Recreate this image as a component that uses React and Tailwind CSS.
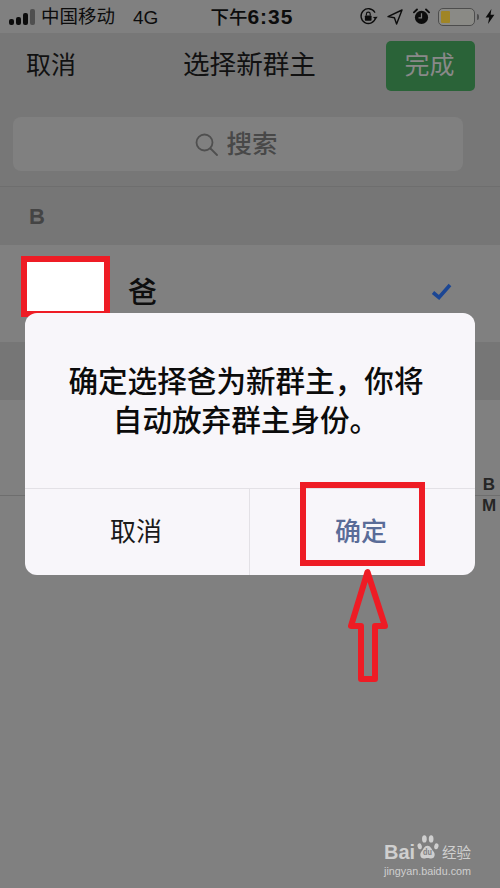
const cjk = "font-['Liberation_Sans','Noto_Sans_CJK_SC',sans-serif]";

function Signal() {
  return (
    <div className="flex items-end gap-[2px] h-[16px] w-[27px]">
      <span className="w-[5px] h-[6px] rounded-[2px] bg-[#0c0c0c]" />
      <span className="w-[5px] h-[8px] rounded-[2px] bg-[#0c0c0c]" />
      <span className="w-[5px] h-[12px] rounded-[2px] bg-[#0c0c0c]" />
      <span className="w-[5px] h-[16px] rounded-[2px] bg-[#4f4f4f]" />
    </div>
  );
}

function RotationLock() {
  return (
    <svg width="19" height="19" viewBox="0 0 20 20" fill="none" stroke="#0c0c0c" strokeWidth="1.4">
      <path d="M17.5 11.5A7.8 7.8 0 1 1 16.6 5.5" strokeLinecap="round" />
      <path d="M14.5 10.5l3 2.6 2.2-2.8" fill="#0c0c0c" stroke="none" />
      <rect x="6.2" y="9" width="7" height="5.5" rx="0.8" fill="#0c0c0c" stroke="none" />
      <path d="M7.8 9V7.4a2 2 0 0 1 4 0V9" strokeWidth="1.2" />
    </svg>
  );
}

function LocationArrow() {
  return (
    <svg width="16" height="16" viewBox="0 0 16 16" fill="none" stroke="#0c0c0c" strokeWidth="1.4" strokeLinejoin="round">
      <path d="M15 1L1 7.6l6.4 1.2L9.6 15z" />
    </svg>
  );
}

function Alarm() {
  return (
    <svg width="17" height="17" viewBox="0 0 18 18">
      <circle cx="9" cy="10" r="7" fill="#0c0c0c" />
      <path d="M1 4.6L4.2 1.6M17 4.6L13.8 1.6" stroke="#0c0c0c" strokeWidth="2" strokeLinecap="round" />
      <path d="M9 5.6V10.4H5.8" stroke="#7a7a7a" strokeWidth="1.3" fill="none" />
    </svg>
  );
}

function Battery() {
  return (
    <div className="flex items-center gap-[2px]">
      <div className="w-[37px] h-[18px] rounded-[5px] border-[1.5px] border-[#4d4d4d] p-[2px] bg-[#8a8a86]">
        <div className="w-[9px] h-full rounded-[1px] bg-[#a08526]" />
      </div>
      <span className="w-[2px] h-[6px] rounded-r-[2px] bg-[#4d4d4d]" />
      <svg width="10" height="15" viewBox="0 0 10 15" className="ml-[4px]">
        <path d="M6.4 0L0.6 8.4H4.2L3 15 9.4 5.8H5.6z" fill="#0c0c0c" />
      </svg>
    </div>
  );
}

function Watermark() {
  return (
    <div className="absolute left-[384px] top-[834px] w-[100px] text-[#cfcfcf]">
      <div className="flex items-end h-[29px]">
        <span className="text-[20px] leading-[22px] font-bold w-[31px]">Bai</span>
        <svg width="25" height="27" viewBox="0 0 48 44" preserveAspectRatio="none" fill="#cfcfcf" className="mb-[2px]">
          <ellipse cx="9" cy="20" rx="4" ry="5" transform="rotate(-20 9 20)" />
          <ellipse cx="18" cy="8" rx="4.5" ry="6" />
          <ellipse cx="31" cy="8" rx="4.5" ry="6" />
          <ellipse cx="41" cy="20" rx="4" ry="5" transform="rotate(20 41 20)" />
          <path d="M24 19c6 0 8 6 12 10 4 5 1 11-5 11-3 0-4-1-7-1s-4 1-7 1c-6 0-9-6-5-11 4-4 6-10 12-10z" />
          <text x="24" y="35" textAnchor="middle" fontSize="14" fontWeight="700" fill="#808080">du</text>
        </svg>
        <span className="text-[14.5px] leading-[20px] ml-[2px] whitespace-nowrap">经验</span>
      </div>
      <div className="text-[10.8px] leading-[14px] mt-[1px] whitespace-nowrap">jingyan.baidu.com</div>
    </div>
  );
}

function Overlays() {
  return (
    <>
      <div className="absolute left-[21px] top-[256px] w-[89px] h-[61px] bg-white border-[6px] border-[#ee1c25]" />

      <div className="absolute left-[25px] top-[313px] w-[450px] h-[262px] bg-[#f8f6fa] rounded-[12px] flex flex-col">
        <div className="h-[175px] pt-[49px] pr-[8px] text-center text-[29.6px] leading-[39px] font-medium text-[#0b0b0b]">
          <p>确定选择爸为新群主，你将</p>
          <p>自动放弃群主身份。</p>
        </div>
        <div className="flex-1 flex border-t border-[#e3e1e6]">
          <div className="w-[225px] flex items-center justify-center pr-[2px] text-[26px] text-[#1a1a1a] border-r border-[#e3e1e6]">取消</div>
          <div className="flex-1 flex items-center justify-center pr-[3px] text-[26px] font-medium text-[#5a6c98]">确定</div>
        </div>
      </div>

      <div className="absolute left-[300px] top-[482px] w-[125px] h-[84px] border-[6px] border-[#ee1c25]" />

      <svg className="absolute left-[346px] top-[567px]" width="44" height="116" viewBox="0 0 44 116" fill="none">
        <path d="M21.5 5L5 59H15V112H29V59H39z" stroke="#ee1c25" strokeWidth="6" strokeLinejoin="round" />
      </svg>

      <div className="absolute left-[481px] top-[474px] w-[16px] flex flex-col items-center text-[17px] leading-[21px] font-bold text-[#262626]">
        <span>B</span>
        <span>M</span>
      </div>

      <Watermark />
    </>
  );
}

export default function App() {
  return (
    <div className={`relative w-[500px] h-[888px] overflow-hidden bg-[#808080] ${cjk}`}>
      {/* status bar */}
      <div className="h-[33px] flex items-center pl-[9px] pr-[5px] text-[#0c0c0c]">
        <Signal />
        <span className="ml-[5px] mt-[2px] text-[18.5px] leading-none">中国移动</span>
        <span className="ml-[18px] mt-[2px] text-[19px] leading-none">4G</span>
        <span className="ml-[52px] text-[18.5px] leading-none font-medium">
          下午<span className="text-[21px] font-bold tracking-[1px]">6:35</span>
        </span>
        <div className="ml-auto flex items-center">
          <RotationLock />
          <div className="ml-[9px]"><LocationArrow /></div>
          <div className="ml-[10px]"><Alarm /></div>
          <div className="ml-[8px]"><Battery /></div>
        </div>
      </div>

      {/* nav */}
      <div className="bg-[#777777] h-[154px] pt-[8px] border-b border-[#6e6e6e]">
        <div className="h-[50px] flex items-center pl-[26px] pr-[25px] text-[#111111]">
          <span className="text-[25px] w-[157px]">取消</span>
          <span className="text-[26.6px]">选择新群主</span>
          <span className="ml-auto w-[89px] h-[50px] rounded-[5px] bg-[#2a6338] text-[#898989] text-[25px] flex items-center justify-center pr-[2px]">完成</span>
        </div>
        <div className="mt-[26px] mx-[13px] w-[450px] h-[54px] rounded-[8px] bg-[#808080] flex items-center justify-center gap-[8px] pr-[3px] text-[#484848]">
          <svg width="23" height="23" viewBox="0 0 23 23" fill="none" stroke="#4f4f4f" strokeWidth="1.8" strokeLinecap="round">
            <circle cx="9.5" cy="9.5" r="8" />
            <path d="M15.5 15.5L22 22" />
          </svg>
          <span className="text-[25.5px] font-medium">搜索</span>
        </div>
      </div>

      {/* list */}
      <div className="h-[58px] bg-[#767676] flex items-center pl-[29px] text-[22px] font-bold text-[#444444]">B</div>
      <div className="h-[97px] bg-[#808080] flex items-center pl-[128px] pr-[48px]">
        <span className="text-[29px] font-medium text-[#0e0e0e]">爸</span>
        <svg className="ml-auto -mt-[4px]" width="21" height="17" viewBox="0 0 21 17" fill="none">
          <path d="M2 9.5L8 14.5L19 2" stroke="#1b4694" strokeWidth="3.6" />
        </svg>
      </div>
      <div className="h-[58px] bg-[#767676]" />
      <div className="h-[96px] bg-[#808080] border-b border-[#6e6e6e]" />

      <Overlays />
    </div>
  );
}
